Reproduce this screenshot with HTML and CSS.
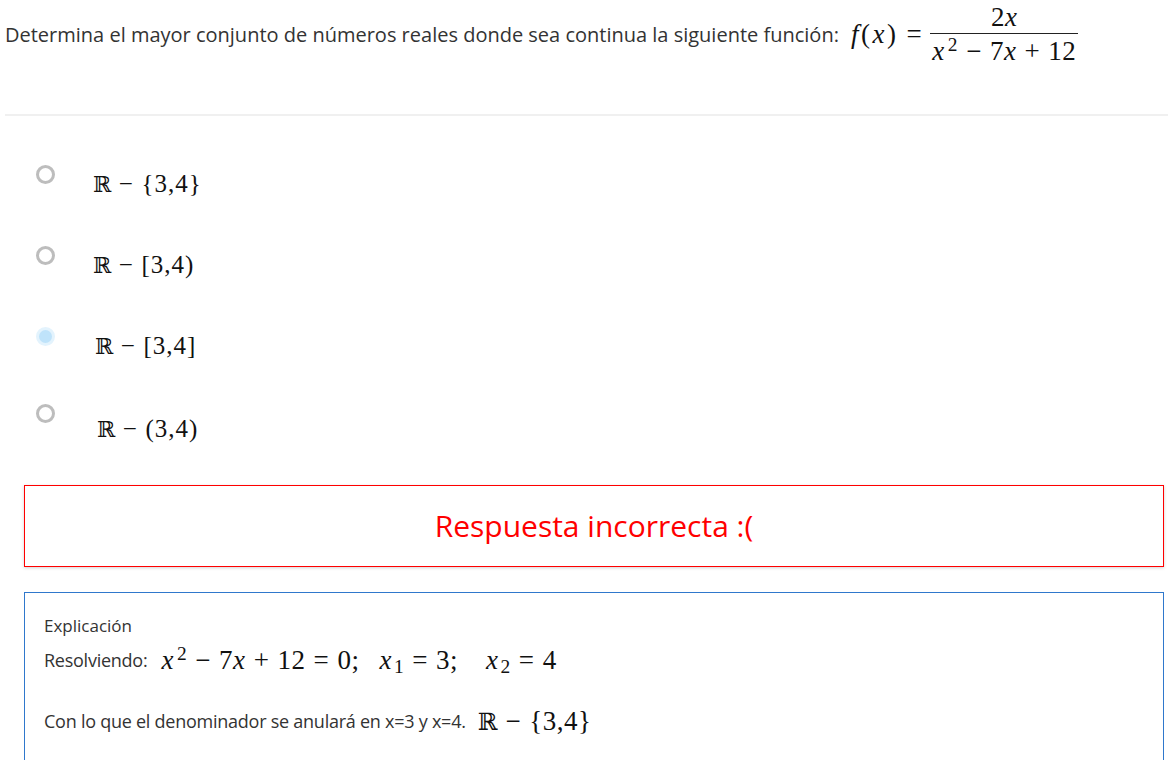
FILE: index.html
```html
<!DOCTYPE html>
<html lang="es">
<head>
<meta charset="utf-8">
<title>Pregunta</title>
<link rel="stylesheet" href="styles.css">
</head>
<body>
<div class="page">
  <div class="question">
    <span class="qtext">Determina el mayor conjunto de números reales donde sea continua la siguiente función:</span>
    <span class="math qmath">
      <span class="mi">f</span><span class="mo-p">(</span><span class="mi">x</span><span class="mo-p">)</span><span class="rel">=</span>
      <span class="frac">
        <span class="num">2<span class="mi">x</span></span>
        <span class="den"><span class="mi">x</span><sup class="sup">2</sup><span class="bin">−</span>7<span class="mi">x</span><span class="bin">+</span>12</span>
      </span>
    </span>
  </div>
  <div class="divider"></div>

  <div class="options">
    <div class="option o1">
      <span class="radio"></span>
      <span class="math otext"><span class="ds">ℝ</span><span class="bin">−</span>{3,4}</span>
    </div>
    <div class="option o2">
      <span class="radio"></span>
      <span class="math otext"><span class="ds">ℝ</span><span class="bin">−</span>[3,4)</span>
    </div>
    <div class="option o3">
      <span class="radio checked"></span>
      <span class="math otext"><span class="ds">ℝ</span><span class="bin">−</span>[3,4]</span>
    </div>
    <div class="option o4">
      <span class="radio"></span>
      <span class="math otext"><span class="ds">ℝ</span><span class="bin">−</span>(3,4)</span>
    </div>
  </div>

  <div class="result">Respuesta incorrecta :(</div>

  <div class="explain">
    <div class="ex-title">Explicación</div>
    <div class="ex-line">
      <span class="ex-text">Resolviendo:</span>
      <span class="math emath"><span class="mi">x</span><sup class="sup">2</sup><span class="bin">−</span>7<span class="mi">x</span><span class="bin">+</span>12<span class="rel">=</span>0;<span class="sp"></span><span class="mi">x</span><sub class="sub">1</sub><span class="rel">=</span>3;<span class="sp2"></span><span class="mi">x</span><sub class="sub">2</sub><span class="rel">=</span>4</span>
    </div>
    <div class="ex-line ex-last">
      <span class="ex-text">Con lo que el denominador se anulará en x=3 y x=4.</span>
      <span class="math emath"><span class="ds">ℝ</span><span class="bin">−</span>{3,4}</span>
    </div>
  </div>
</div>
</body>
</html>
```

FILE: styles.css
```css
html, body {
  margin: 0;
  padding: 0;
  background: #ffffff;
}
body {
  font-family: "Open Sans", "Liberation Sans", sans-serif;
  color: #333333;
  overflow: hidden;
}
.page {
  width: 1168px;
}
.question {
  display: flex;
  align-items: center;
  padding: 3px 0 0 5px;
  height: 62px;
}
.qtext {
  font-size: 20px;
  color: #333;
  white-space: nowrap;
}
.math {
  font-family: "Liberation Serif", "DejaVu Serif", serif;
  color: #111;
  white-space: nowrap;
  letter-spacing: 0.5px;
}
.qmath {
  display: inline-flex;
  align-items: center;
  font-size: 27px;
  margin-left: 12px;
}
.mi {
  font-style: italic;
}
.mo-p {
  padding: 0 2px;
}
.rel {
  padding: 0 0.3em;
}
.bin {
  padding: 0 0.3em;
}
.frac {
  display: inline-flex;
  flex-direction: column;
  align-items: center;
}
.num {
  line-height: 28px;
  padding: 0 4px 2px;
}
.den {
  line-height: 28px;
  border-top: 1px solid #222;
  padding: 3px 2px 0;
}
.sup {
  font-size: 0.72em;
  vertical-align: 0;
  position: relative;
  top: -0.45em;
  padding-left: 3px;
  line-height: 0;
}
.sub {
  font-size: 0.72em;
  vertical-align: 0;
  position: relative;
  top: 0.25em;
  padding-left: 2px;
  line-height: 0;
}
.divider {
  height: 2px;
  background: #f0f0f0;
  margin: 49px 0 0 5px;
}
.options {
  padding-top: 38px;
}
.option {
  display: flex;
  align-items: flex-start;
  height: 81px;
}
.radio {
  box-sizing: border-box;
  width: 19px;
  height: 19px;
  border-radius: 50%;
  border: 3px solid #bdbdbd;
  margin: 11px 0 0 36px;
  flex: none;
}
.radio.checked {
  border: 3px solid #e3f3fd;
  background: #bfe3fa;
}
.otext {
  font-size: 25px;
  line-height: 30px;
  margin: 15px 0 0 38px;
  letter-spacing: 1px;
}
.o3 .otext { margin-left: 40px; }
.o4 .radio { margin-top: 7px; }
.o4 .otext { margin-left: 42px; margin-top: 17px; }
.ds {
  font-family: "DejaVu Serif", serif;
  font-size: 0.88em;
  letter-spacing: 0;
}
.result {
  box-sizing: border-box;
  margin: 7px 4px 0 24px;
  height: 82px;
  border: 1px solid #ff0000;
  box-shadow: 0 1px 3px rgba(0, 0, 0, 0.18);
  color: #ff0000;
  font-size: 30px;
  display: flex;
  align-items: center;
  justify-content: center;
  padding-bottom: 1px;
}
.explain {
  margin: 25px 4px 0 24px;
  border: 1px solid #2f78cc;
  border-bottom: none;
  padding: 19px 0 0 19px;
  height: 148px;
}
.ex-title {
  font-size: 17px;
  line-height: 28px;
  color: #333;
}
.ex-line {
  display: flex;
  align-items: center;
  color: #333;
  height: 36px;
  margin-top: 2px;
}
.ex-text {
  font-size: 18px;
  letter-spacing: -0.25px;
}
.ex-last {
  margin-top: 25px;
}
.emath {
  font-size: 27px;
  margin-left: 14px;
}
.ex-last .emath {
  margin-left: 12px;
}
.sp { display: inline-block; width: 20px; }
.sp2 { display: inline-block; width: 28px; }
```
